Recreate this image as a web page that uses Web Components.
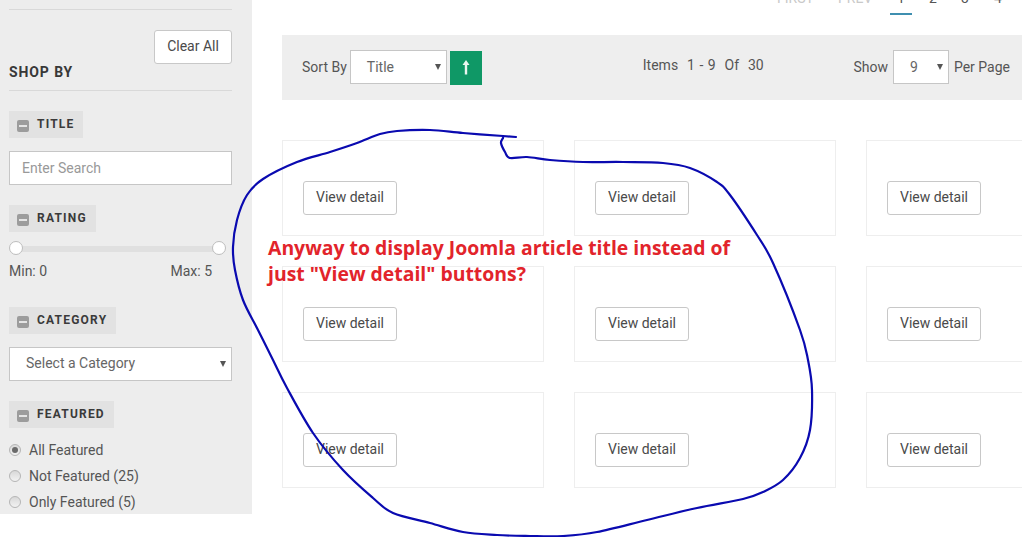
<!DOCTYPE html>
<html><head><meta charset="utf-8">
<style>
html,body{margin:0;padding:0;background:#fff;width:1022px;height:537px;overflow:hidden;font-family:Roboto,sans-serif;color:#444}
</style></head><body>
<template id="t-chip"><style>
:host{display:flex;align-items:center;gap:8px;width:max-content;height:27px;background:#e2e2e2;padding:0 9px 0 8px;box-sizing:border-box;font:700 12px/1 Roboto,sans-serif;letter-spacing:1.2px;color:#3a3a3a}
i{width:12px;height:12px;border-radius:2px;background:#9c9c9c;display:flex;align-items:center;justify-content:center;margin-top:3px}
i::after{content:"";width:8px;height:2px;background:#e4e4e4}
span{margin-top:-1px}
</style><i></i><span><slot></slot></span></template>

<template id="t-select"><style>
:host{display:flex;align-items:center;box-sizing:border-box;height:34px;background:#fff;border:1px solid #c6c6c6;font:14px Roboto,sans-serif;color:#666;position:relative}
span{flex:1}
b{width:0;height:0;border-left:3px solid transparent;border-right:3px solid transparent;border-top:6px solid #555;position:absolute;right:5px;top:13px}
</style><span><slot></slot></span><b></b></template>

<template id="t-button"><style>
:host{display:flex;align-items:center;justify-content:center;box-sizing:border-box;height:34px;width:94px;padding-bottom:2px;background:#fff;border:1px solid #c8c8c8;border-radius:3px;font:14px Roboto,sans-serif;color:#4a4a4a}
</style><slot></slot></template>

<template id="t-radio"><style>
:host{display:flex;align-items:center;gap:8px;height:26px;font:14px Roboto,sans-serif;color:#555}
i{width:12px;height:12px;box-sizing:border-box;border-radius:50%;border:1px solid #b5b5b5;background:linear-gradient(#d8d8d8,#f2f2f2);display:flex;align-items:center;justify-content:center}
:host([checked]) i::after{content:"";width:6px;height:6px;border-radius:50%;background:#6a6a6a}
</style><i></i><span><slot></slot></span></template>

<template id="t-sidebar"><style>
:host{display:block;width:252px;height:514px;flex:none;background:#ededed;box-sizing:border-box;padding:9px 20px 0 9px;overflow:hidden}
.rule{height:1px;background:#d9d9d9}
.head{display:flex;justify-content:space-between;align-items:flex-end;height:81px;box-sizing:border-box;border-bottom:1px solid #d9d9d9}
h3{margin:0 0 11px;font:700 14px/1 Roboto,sans-serif;letter-spacing:.9px;color:#383838}
.clear{margin-bottom:26px;width:78px}
.input{display:flex;align-items:center;box-sizing:border-box;height:34px;margin:13px 0 20px;padding-left:12px;background:#fff;border:1px solid #c6c6c6;font:14px Roboto,sans-serif;color:#999}
.track{position:relative;height:6px;margin:14px 12px 0 6px;background:#e0e0e0;border-radius:3px}
.h{position:absolute;top:-5px;width:14px;height:14px;box-sizing:border-box;border-radius:50%;background:#fff;border:1px solid #bdbdbd}
.h.l{left:-6px}.h.r{right:-6px}
.mm{display:flex;justify-content:space-between;padding-right:20px;margin:11px 0 30px;font:14px/16px Roboto,sans-serif;color:#555;height:14px}
x-select{margin:13px 0 20px;padding:0 0 2px 16px}
.radios{margin-top:9px}
</style>
<div class="rule"></div>
<div class="head"><h3>SHOP BY</h3><x-button class="clear">Clear All</x-button></div>
<x-chip style="margin-top:20px">TITLE</x-chip>
<div class="input">Enter Search</div>
<x-chip>RATING</x-chip>
<div class="track"><div class="h l"></div><div class="h r"></div></div>
<div class="mm"><span>Min: 0</span><span>Max: 5</span></div>
<x-chip>CATEGORY</x-chip>
<x-select>Select a Category</x-select>
<x-chip>FEATURED</x-chip>
<div class="radios"><x-radio checked>All Featured</x-radio><x-radio>Not Featured (25)</x-radio><x-radio>Only Featured (5)</x-radio></div>
</template>

<template id="t-pager"><style>
:host{display:block;height:35px;box-sizing:border-box;font:14px/1 Roboto,sans-serif;color:#555;position:relative;overflow:hidden}
span{position:absolute;top:-9px}
.off{color:#c9c9c9}
.cur{position:absolute;left:608px;top:13px;width:22px;height:2px;background:#3f8fb0}
</style>
<span class="off" style="left:495px">FIRST</span><span class="off" style="left:556px">PREV</span>
<span style="left:615px">1</span><span style="left:647px">2</span><span style="left:679px">3</span><span style="left:712px">4</span>
<div class="cur"></div></template>

<template id="t-toolbar"><style>
:host{display:flex;align-items:center;box-sizing:border-box;height:65px;background:#eee;padding-left:20px;font:14px Roboto,sans-serif;color:#555}
.lab{margin-bottom:1px}
.sort{width:97px;margin:0 0 1px 3px;padding-left:16px}
.up{width:32px;height:34px;margin-left:3px;background:#0f9866;display:flex;align-items:center;justify-content:center}
.items{margin-left:161px;margin-top:-5px;word-spacing:1px;white-space:nowrap}
.show{margin-left:auto;margin-bottom:1px;display:flex;align-items:center;padding-right:12px}
.n{width:56px;margin:0 5px;padding-left:16px}
</style>
<span class="lab">Sort By</span><x-select class="sort">Title</x-select>
<div class="up"><svg width="8" height="15" viewBox="0 0 8 15"><path d="M4 0 7.5 5H5.2V14.5H2.8V5H.5Z" fill="#e9f6ef"/></svg></div>
<span class="items">Items&nbsp;&nbsp;1 - 9&nbsp;&nbsp;Of&nbsp;&nbsp;30</span>
<div class="show"><span>Show</span><x-select class="n">9</x-select><span>Per Page</span></div>
</template>

<template id="t-card"><style>
:host{display:block;box-sizing:border-box;width:262px;height:96px;flex:none;border:1px solid #eee;padding:40px 0 0 20px}
</style><x-button>View detail</x-button></template>

<template id="t-main"><style>
:host{display:block;flex:none;width:740px;margin-left:30px}
.grid{display:grid;grid-template-columns:repeat(3,262px);gap:30px;margin-top:40px}
</style>
<x-pager></x-pager><x-toolbar></x-toolbar>
<div class="grid"><x-card></x-card><x-card></x-card><x-card></x-card><x-card></x-card><x-card></x-card><x-card></x-card><x-card></x-card><x-card></x-card><x-card></x-card></div>
</template>

<template id="t-note"><style>
:host{position:absolute;left:268px;top:235px;font:700 19.4px/26px "Open Sans",sans-serif;color:#e2242b;white-space:nowrap}
</style><slot></slot></template>

<template id="t-scribble"><style>
:host{position:absolute;left:0;top:0;width:1022px;height:537px;pointer-events:none}
svg{display:block}
</style><svg width="1022" height="537" viewBox="0 0 1022 537" fill="none"><path id="p" stroke="#0a0ab0" stroke-width="2.2" stroke-linecap="round" stroke-linejoin="round"/></svg></template>

<x-page-root></x-page-root>
<script>
function reg(name,tid,init){customElements.define(name,class extends HTMLElement{constructor(){super();this.attachShadow({mode:'open'}).appendChild(document.getElementById(tid).content.cloneNode(true));if(init)init(this.shadowRoot);}});}
var pts=[[516,137],[503,136],[463,133],[430,130],[397,131],[380,134],[357,143],[330,152],[297,162],[263,179],[247,195],[237,220],[233,247],[235,270],[243,300],[258,330],[273,360],[287,388],[313,433],[343,470],[373,498],[393,513],[430,523],[463,532],[497,535],[530,536],[563,536],[597,532],[647,520],[697,508],[743,499],[763,492],[783,480],[800,458],[810,430],[812,390],[808,360],[800,330],[773,263],[757,235],[730,195],[717,182],[690,168],[663,163],[623,162],[583,162],[550,160],[527,157],[510,158],[505,152],[501,143],[503,138]];
function smooth(a){var d='M'+a[0].join(' ');for(var i=0;i<a.length-1;i++){var p0=a[i-1]||a[i],p1=a[i],p2=a[i+1],p3=a[i+2]||p2;d+='C'+(p1[0]+(p2[0]-p0[0])/6).toFixed(1)+' '+(p1[1]+(p2[1]-p0[1])/6).toFixed(1)+' '+(p2[0]-(p3[0]-p1[0])/6).toFixed(1)+' '+(p2[1]-(p3[1]-p1[1])/6).toFixed(1)+' '+p2[0]+' '+p2[1];}return d;}
[['x-chip','t-chip'],['x-select','t-select'],['x-button','t-button'],['x-radio','t-radio'],['x-sidebar','t-sidebar'],['x-pager','t-pager'],['x-toolbar','t-toolbar'],['x-card','t-card'],['x-main','t-main'],['x-note','t-note']].forEach(function(a){reg(a[0],a[1]);});
reg('x-scribble','t-scribble',function(r){r.getElementById('p').setAttribute('d',smooth(pts));});
customElements.define('x-page-root',class extends HTMLElement{constructor(){super();this.attachShadow({mode:'open'}).innerHTML='<style>:host{display:flex;align-items:flex-start;width:1022px;height:537px;overflow:hidden;position:relative}</style><x-sidebar></x-sidebar><x-main></x-main><x-scribble></x-scribble><x-note>Anyway to display Joomla article title instead of<br>just "View detail" buttons?</x-note>';}});
</script>
</body></html>
